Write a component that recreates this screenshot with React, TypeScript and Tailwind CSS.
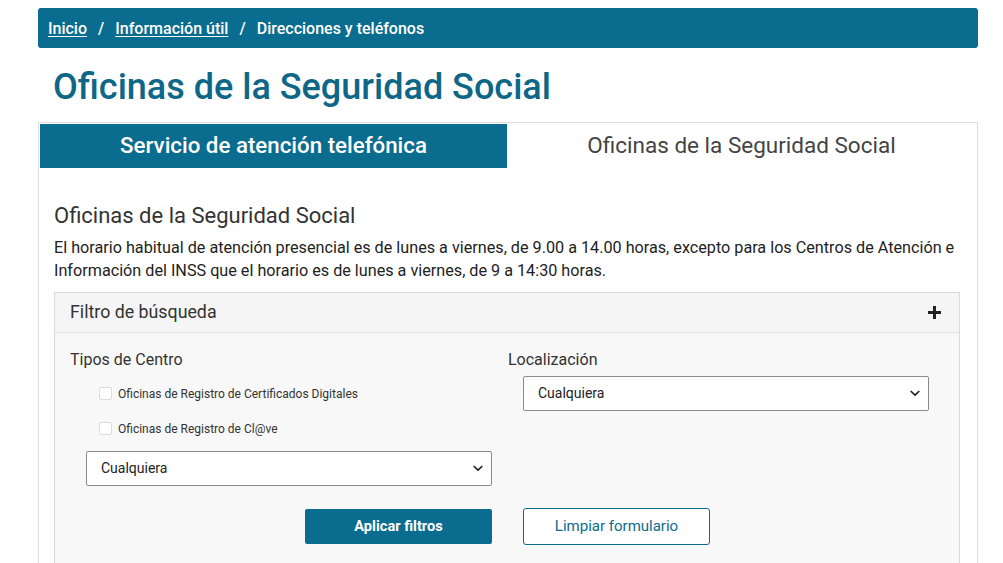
import React from "react";

const TEAL = "bg-[#0a6c8e]";

function Chevron() {
  return (
    <svg width="10" height="7" viewBox="0 0 10 7" className="shrink-0">
      <polyline points="1.2,1.5 5,5.2 8.8,1.5" fill="none" stroke="#222" strokeWidth="1.7" strokeLinecap="round" strokeLinejoin="round" />
    </svg>
  );
}

function Select({ className = "" }: { className?: string }) {
  return (
    <div
      className={`flex items-center justify-between h-[35px] bg-white border border-[#8a8a8a] rounded-[2px] pl-[14px] pr-[8px] text-[14px] text-[#222] ${className}`}
    >
      <span>Cualquiera</span>
      <Chevron />
    </div>
  );
}

function Check({ label }: { label: string }) {
  return (
    <div className="flex items-center h-[35px] gap-[6px]">
      <span className="w-[13px] h-[13px] bg-white border border-[#dcdcdc] rounded-[2px]" />
      <span className="text-[12px] text-[#333]">{label}</span>
    </div>
  );
}

export default function App() {
  return (
    <div className="w-[1003px] h-[563px] overflow-hidden bg-white font-['Roboto',_'Liberation_Sans',_sans-serif]">
      <div className="ml-[38px] w-[940px] pt-[8px]">
        {/* Breadcrumb */}
        <nav className={`${TEAL} h-[40px] rounded-[3px] flex items-center px-[10px] pt-[1px] text-[16px] font-medium text-white`}>
          <span className="underline underline-offset-2">Inicio</span>
          <span className="mx-[11px]">/</span>
          <span className="underline underline-offset-2">Información útil</span>
          <span className="mx-[11px]">/</span>
          <span>Direcciones y teléfonos</span>
        </nav>

        {/* Title */}
        <h1 className="mt-[18px] pl-[15px] h-[42px] leading-[42px] text-[36px] font-medium text-[#0e6787]">
          Oficinas de la Seguridad Social
        </h1>

        {/* Tabs container */}
        <div className="mt-[14px] border border-[#dedede] h-[460px] p-[1px]">
          <div className="grid grid-cols-[467px_1fr] h-[44px]">
            <div className={`${TEAL} flex items-center justify-center text-[22.3px] font-medium text-white`}>
              Servicio de atención telefónica
            </div>
            <div className="flex items-center justify-center text-[22.5px] text-[#444]">
              Oficinas de la Seguridad Social
            </div>
          </div>

          <div className="px-[14px] pt-[34px]">
            <h2 className="text-[22px] leading-[28px] text-[#333]">Oficinas de la Seguridad Social</h2>
            <p className="mt-[6px] text-[16.2px] leading-[23px] text-[#222]">
              El horario habitual de atención presencial es de lunes a viernes, de 9.00 a 14.00 horas, excepto para los Centros de Atención e Información del INSS que el horario es de lunes a viernes, de 9 a 14:30 horas.
            </p>

            {/* Filter panel */}
            <div className="mt-[10px] mr-[2px] border border-[#dadada] bg-[#f8f8f8] h-[300px]">
              <div className="h-[40px] bg-[#f5f5f5] border-b border-[#e2e2e2] flex items-center justify-between pl-[15px] pr-[18px]">
                <span className="text-[17.8px] text-[#333]">Filtro de búsqueda</span>
                <svg width="13" height="13" viewBox="0 0 13 13">
                  <rect x="5" y="0" width="3" height="13" fill="#222" />
                  <rect x="0" y="5" width="13" height="3" fill="#222" />
                </svg>
              </div>

              <div className="pt-[17px] px-[15px]">
                <div className="grid grid-cols-[422px_437px] gap-x-[16px]">
                  <div>
                    <div className="h-[20px] leading-[20px] text-[16px] text-[#333]">Tipos de Centro</div>
                    <div className="mt-[6px] pl-[29px]">
                      <Check label="Oficinas de Registro de Certificados Digitales" />
                      <Check label="Oficinas de Registro de Cl@ve" />
                    </div>
                    <Select className="mt-[5px] ml-[16px]" />
                  </div>
                  <div>
                    <div className="h-[20px] leading-[20px] text-[16px] text-[#333]">Localización</div>
                    <Select className="mt-[6px] ml-[15px] w-[406px]" />
                  </div>
                </div>

                <div className="grid grid-cols-[422px_437px] gap-x-[16px] mt-[22px]">
                  <div className="flex justify-end">
                    <button className={`${TEAL} w-[187px] h-[35px] mt-[1px] rounded-[2px] text-[14.6px] font-bold text-white`}>
                      Aplicar filtros
                    </button>
                  </div>
                  <div>
                    <button className="ml-[15px] w-[187px] h-[37px] rounded-[3px] bg-white border border-[#0a6c8e] text-[15px] font-normal text-[#0a6c8e]">
                      Limpiar formulario
                    </button>
                  </div>
                </div>
              </div>
            </div>
          </div>
        </div>
      </div>
    </div>
  );
}
